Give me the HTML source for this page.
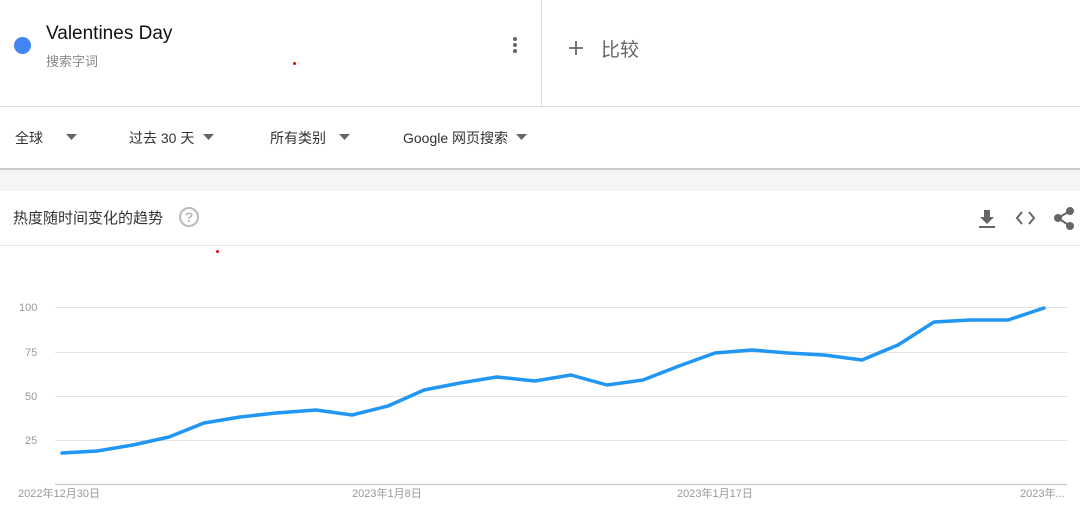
<!DOCTYPE html>
<html><head><meta charset="utf-8"><style>
*{margin:0;padding:0;box-sizing:border-box}
body{width:1080px;height:510px;overflow:hidden;background:#fff;font-family:"Liberation Sans","Noto Sans CJK SC",sans-serif;position:relative;color:#202124}
.a{position:absolute}
</style></head><body>
<div class="a" style="left:14px;top:37px;width:17px;height:17px;border-radius:50%;background:#4285f4"></div>
<div class="a" style="left:46px;top:23px;font-size:19px;color:#111">Valentines Day</div>
<div class="a" style="left:46px;top:51px;font-size:13px;color:#888">搜索字词</div>
<div class="a" style="left:293px;top:62px;width:3px;height:3px;border-radius:50%;background:#e00"></div>
<svg class="a" style="left:510px;top:36px" width="10" height="20"><circle cx="5" cy="3" r="2" fill="#666"/><circle cx="5" cy="9" r="2" fill="#666"/><circle cx="5" cy="15" r="2" fill="#666"/></svg>
<div class="a" style="left:541px;top:0;width:1px;height:106px;background:#ddd"></div>
<svg class="a" style="left:568px;top:40px" width="16" height="16"><path d="M8 1v14M1 8h14" stroke="#777" stroke-width="2"/></svg>
<div class="a" style="left:601px;top:35px;font-size:19px;color:#666">比较</div>
<div class="a" style="left:0;top:106px;width:1080px;height:1px;background:#ddd"></div>
<div class="a" style="left:15px;top:128px;font-size:14px;color:#333">全球</div>
<div class="a" style="left:129px;top:128px;font-size:14px;color:#333">过去 30 天</div>
<div class="a" style="left:270px;top:128px;font-size:14px;color:#333">所有类别</div>
<div class="a" style="left:403px;top:128px;font-size:14px;color:#333">Google 网页搜索</div>
<svg class="a" style="left:0;top:0" width="1080" height="510">
<g fill="#666"><path d="M66 134h11l-5.5 6z"/><path d="M203 134h11l-5.5 6z"/><path d="M339 134h11l-5.5 6z"/><path d="M516 134h11l-5.5 6z"/></g>
</svg>
<div class="a" style="left:0;top:168px;width:1080px;height:2px;background:#ccc"></div>
<div class="a" style="left:0;top:170px;width:1080px;height:21px;background:#f5f5f5"></div>
<div class="a" style="left:13px;top:207px;font-size:15px;color:#333">热度随时间变化的趋势</div>
<div class="a" style="left:179px;top:207px;width:20px;height:20px;border-radius:50%;border:2px solid #bbb;color:#bbb;font-size:14px;text-align:center;line-height:16px;font-weight:bold">?</div>
<div class="a" style="left:0;top:245px;width:1080px;height:1px;background:#e8e8e8"></div>
<div class="a" style="left:216px;top:250px;width:3px;height:3px;border-radius:50%;background:#e00"></div>
<svg class="a" style="left:0;top:0" width="1080" height="510">
<g fill="#666"><path d="M984 210h6v7h4l-7 7-7-7h4z"/><rect x="979" y="226" width="16" height="2"/></g>
<path d="M1022 212l-5 6 5 6M1029 212l5 6-5 6" stroke="#666" stroke-width="2" fill="none"/>
<g fill="#666" stroke="#666" stroke-width="2"><circle cx="1070" cy="211" r="3"/><circle cx="1058" cy="218" r="3"/><circle cx="1070" cy="226" r="3"/><path d="M1070 211l-12 7 12 8" fill="none"/></g>
<g stroke="#e3e3e3" stroke-width="1"><path d="M55 307.5H1067M55 352.5H1067M55 396.5H1067M55 440.5H1067"/></g>
<path d="M55 484.5H1067" stroke="#ccc" stroke-width="1.5"/>
<g font-family="Liberation Sans" font-size="11" fill="#999"><text x="19" y="311">100</text><text x="25" y="356">75</text><text x="25" y="400">50</text><text x="25" y="444">25</text>
<text x="18" y="497">2022年12月30日</text><text x="352" y="497">2023年1月8日</text><text x="677" y="497">2023年1月17日</text><text x="1020" y="497">2023年...</text></g>
<polyline fill="none" stroke="#2196f3" stroke-width="3.5" stroke-linejoin="round" stroke-linecap="round" points="62,453 97,451 133,445 169,437 204,423 240,417 276,413 316,410 352,415 388,406 424,390 460,383 497,377 535,381 571,375 607,385 643,380 679,366 715,353 752,350 788,353 824,355 862,360 898,345 934,322 970,320 1008,320 1044,308"/>
</svg>
</body></html>
